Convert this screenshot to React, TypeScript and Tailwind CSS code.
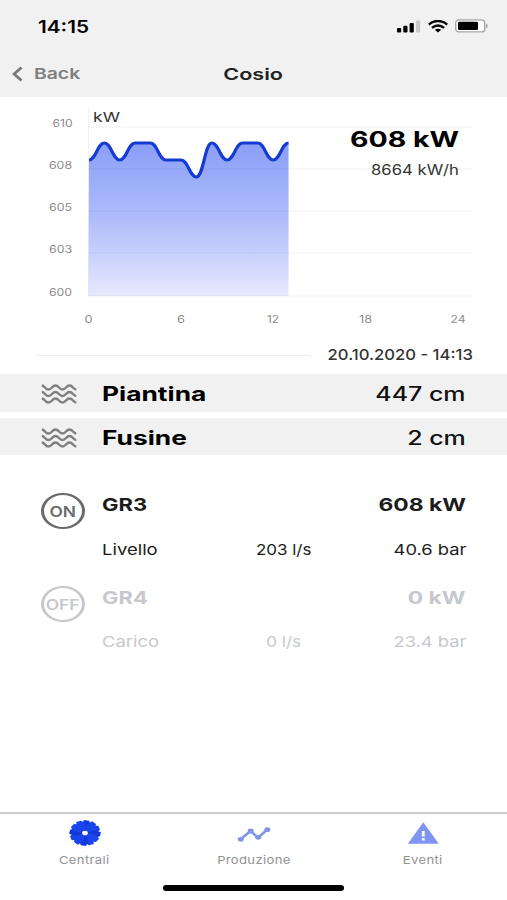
import React from "react";
import clsx from "clsx";

const GRID = [
  { label: "610", y: 30 },
  { label: "608", y: 72 },
  { label: "605", y: 114 },
  { label: "603", y: 156 },
  { label: "600", y: 199 },
];

const HOURS = [
  { label: "0", x: 88.5, w: 8 },
  { label: "6", x: 181, w: 8 },
  { label: "12", x: 273, w: 12 },
  { label: "18", x: 365.5, w: 13 },
  { label: "24", x: 458, w: 15 },
];

// one reading per hour, already in chart units
const READINGS = [63, 46, 63, 46, 46, 63, 63, 80, 46, 63, 46, 46, 63, 46];
const STEP = 15.35;

const linePath = READINGS.map((y, i) => {
  const x = 89 + i * STEP;
  if (i === 0) return `M${x} ${y}`;
  const prev = x - STEP;
  return `C${prev + 7} ${READINGS[i - 1]} ${x - 7} ${y} ${x} ${y}`;
}).join(" ");

const StatusBar = () => (
  <div className="flex h-[52px] items-center justify-between pl-[38px] pr-[19px]">
    <span className="mt-1 inline-block origin-left scale-x-[1.22] text-[17px] font-semibold text-black">
      14:15
    </span>
    <div className="flex items-center gap-[7px]">
      <svg width="24" height="13" viewBox="0 0 24 13">
        <rect x="0" y="8" width="4.2" height="4.5" rx="1" />
        <rect x="6.3" y="5.8" width="4.2" height="6.7" rx="1" />
        <rect x="12.6" y="3" width="4.2" height="9.5" rx="1" />
        <rect x="19" y="0.5" width="4.2" height="12" rx="1" fill="#c9c9c9" />
      </svg>
      <svg width="20" height="13" viewBox="0 0 20 13" fill="none" stroke="#000" strokeWidth="2.4">
        <path d="M0.8 4.6C6 -.2 14 -.2 19.2 4.6" />
        <path d="M4 7.8C7.5 4.7 12.5 4.7 16 7.8" />
        <path d="M6.8 9.8C8.5 8.4 11.5 8.4 13.2 9.8L10 12.6Z" fill="#000" stroke="none" />
      </svg>
      <svg width="33" height="14" viewBox="0 0 33 14">
        <rect x="0.7" y="0.9" width="29" height="12" rx="3.2" fill="#fff" stroke="#a5a5a5" strokeWidth="1.4" />
        <rect x="3" y="2.7" width="20" height="8.4" rx="1.4" />
        <path d="M31 4.8C33.2 5.2 33.2 8.8 31 9.2Z" fill="#a5a5a5" />
      </svg>
    </div>
  </div>
);

const Header = () => (
  <header className="h-[97px] bg-[#f1f1f1]">
    <StatusBar />
    <div className="grid h-[43px] grid-cols-3 items-center text-base font-semibold">
      <button type="button" className="flex items-center gap-[11px] pl-3 text-[#7f7f7f]">
        <svg width="11" height="16" viewBox="0 0 11 16" fill="none" stroke="#777" strokeWidth="2.8">
          <path d="M9.5 1.5L2 8l7.5 6.5" />
        </svg>
        <span className="mt-0.5 inline-block origin-left scale-x-[1.29] text-[15px]">Back</span>
      </button>
      <h1 className="text-center text-[#222]">
        <span className="inline-block scale-x-[1.35]">Cosio</span>
      </h1>
    </div>
  </header>
);

const PowerChart = () => (
  <svg width="507" height="236" viewBox="0 0 507 236" className="block">
    <defs>
      <linearGradient id="area" x1="0" y1="46" x2="0" y2="199" gradientUnits="userSpaceOnUse">
        <stop offset="0" stopColor="#8a9ef7" />
        <stop offset="0.5" stopColor="#afbdfb" />
        <stop offset="1" stopColor="#e7e9fd" />
      </linearGradient>
    </defs>
    <path d={`${linePath} V199 H88.5 Z`} fill="url(#area)" />
    {GRID.map((g) => (
      <g key={g.label}>
        <line x1="88" x2="473" y1={g.y} y2={g.y} stroke="#000" strokeOpacity="0.055" />
        <text
          x={g.label === "610" ? 52.5 : 49}
          y={g.y + 0.4}
          fontSize="10.5"
          fill="#8c8c8c"
          textLength={g.label === "610" ? 20 : 23}
          lengthAdjust="spacingAndGlyphs"
        >
          {g.label}
        </text>
      </g>
    ))}
    <line x1="88.5" x2="88.5" y1="11" y2="199" stroke="#000" strokeOpacity="0.05" />
    <path d={linePath} fill="none" stroke="#153cd2" strokeWidth="3.2" />
    <text x="93" y="25" fontSize="13.5" fill="#333" textLength="27" lengthAdjust="spacingAndGlyphs">
      kW
    </text>
    {HOURS.map((h) => (
      <text
        key={h.label}
        x={h.x - h.w / 2}
        y="225.5"
        fontSize="10.5"
        fill="#8c8c8c"
        textLength={h.w}
        lengthAdjust="spacingAndGlyphs"
      >
        {h.label}
      </text>
    ))}
    <text x="350" y="50.4" fontSize="21" fontWeight="700" textLength="109" lengthAdjust="spacingAndGlyphs">
      608 kW
    </text>
    <text x="371" y="78" fontSize="14" fill="#333" textLength="88" lengthAdjust="spacingAndGlyphs">
      8664 kW/h
    </text>
  </svg>
);

const Waves = () => (
  <svg width="36" height="20" viewBox="0 0 36 20" fill="none" stroke="#808080" strokeWidth="2.4">
    {[3.5, 10, 16.5].map((y) => (
      <path
        key={y}
        d={`M.8 ${y - 2}C4 ${y - 2} 4 ${y + 2} 7.5 ${y + 2}S11 ${y - 2} 14.5 ${y - 2}S18 ${y + 2} 21.5 ${y + 2}S25 ${y - 2} 28.5 ${y - 2}S32 ${y + 2} 35.3 ${y + 2}`}
      />
    ))}
  </svg>
);

const LevelRow = ({ name, value }: { name: string; value: string }) => (
  <div className="flex h-[37.5px] items-center bg-[#f1f1f1] pl-[41px] pr-[41px] pt-[3px] text-[19.5px] text-black">
    <Waves />
    <span className="ml-[25px] mt-px inline-block origin-left scale-x-[1.35] font-bold">{name}</span>
    <span className="ml-auto mt-px inline-block origin-right scale-x-[1.28] font-medium text-[#111]">
      {value}
    </span>
  </div>
);

interface GroupProps {
  on?: boolean;
  name: string;
  power: string;
  mode: string;
  flow: string;
  pressure: string;
}

const GroupRow = ({ on, name, power, mode, flow, pressure }: GroupProps) => (
  <div className={clsx("flex h-[92.5px] px-[41px]", on ? "text-[#1c1c1c]" : "text-[#c6c8cd]")}>
    <div
      className={clsx(
        "mt-[8px] flex h-[36px] w-[44px] shrink-0 items-center justify-center rounded-[50%] border-x-[3px] border-y-2 pt-0.5 text-sm font-semibold",
        on ? "border-[#6b6b6b] text-[#6b6b6b]" : "border-[#c6c8cd]"
      )}
    >
      <span className="inline-block scale-x-[1.24]">{on ? "ON" : "OFF"}</span>
    </div>
    <div className="ml-[17px] flex-1">
      <div className="flex h-10 items-center justify-between text-lg font-bold">
        <span className="inline-block origin-left scale-x-[1.22]">{name}</span>
        <span className="inline-block origin-right scale-x-[1.27]">{power}</span>
      </div>
      <div className="mt-[5px] grid h-10 grid-cols-3 items-center text-[15px]">
        <span className="inline-block origin-left scale-x-[1.23]">{mode}</span>
        <span className="inline-block scale-x-[1.13] text-center">{flow}</span>
        <span className="inline-block origin-right scale-x-[1.22] text-right">{pressure}</span>
      </div>
    </div>
  </div>
);

const Turbine = () => (
  <svg width="34" height="28" viewBox="-17 -14 34 28">
    <g transform="scale(1.22 1)">
      <circle r="10" fill="#1a45ea" />
      {Array.from({ length: 12 }, (_, i) => (
        <path
          key={i}
          d="M-1 -2L-4 -8L-2.6 -12.8L1.6 -12.6L3.6 -9L3 -5Z"
          fill={i % 3 ? "#1a45ea" : "#1339d8"}
          transform={`rotate(${i * 30 + 8})`}
        />
      ))}
      <circle r="2.3" fill="#fff" />
    </g>
  </svg>
);

const Trend = () => (
  <svg width="34" height="28" viewBox="0 0 34 28" fill="#8095e8">
    <path d="M3.5 20.5L13.5 12L21 18.5L30.5 10.5" fill="none" stroke="#8095e8" strokeWidth="2.5" />
    <ellipse cx="3.8" cy="20.3" rx="3" ry="2.4" />
    <ellipse cx="13.7" cy="12" rx="3" ry="2.4" />
    <ellipse cx="21.2" cy="18.3" rx="3" ry="2.4" />
    <ellipse cx="30.3" cy="10.7" rx="3" ry="2.4" />
  </svg>
);

const Warning = () => (
  <svg width="34" height="28" viewBox="0 0 34 28">
    <path d="M17.3 3.3L32.8 24.8H1.8Z" fill="#8095f3" />
    <rect x="15.9" y="12" width="2.8" height="5.5" fill="#fff" />
    <rect x="15.9" y="19.2" width="2.8" height="2.3" fill="#fff" />
  </svg>
);

const TABS = [
  { label: "Centrali", icon: <Turbine /> },
  { label: "Produzione", icon: <Trend /> },
  { label: "Eventi", icon: <Warning /> },
];

const TabBar = () => (
  <footer className="mt-auto h-[88px] border-t-2 border-[#cecece]">
    <nav className="grid grid-cols-3 pt-[5px]">
      {TABS.map((tab) => (
        <button key={tab.label} type="button" className="flex flex-col items-center text-[#929292]">
          {tab.icon}
          <span className="mt-[5px] inline-block scale-x-[1.19] text-[11px] leading-4 tracking-wide">
            {tab.label}
          </span>
        </button>
      ))}
    </nav>
    <div className="mx-auto mt-[17px] h-[6px] w-[181px] rounded-full bg-black" />
  </footer>
);

const App: React.FC = () => {
  return (
    <div className="flex h-[900px] w-[507px] flex-col overflow-hidden bg-white font-['Inter',sans-serif]">
      <Header />
      <PowerChart />

      {/* LAST UPDATE */}
      <div className="flex h-[41px] items-center pl-9 pr-[34px] pt-[3px]">
        <div className="h-px w-[274px] bg-[#ededed]" />
        <span className="ml-auto inline-block origin-right scale-x-[1.11] whitespace-nowrap text-[15px] font-medium text-[#333]">
          20.10.2020 - 14:13
        </span>
      </div>

      {/* WATER LEVELS */}
      <div className="flex flex-col gap-[6px]">
        <LevelRow name="Piantina" value="447 cm" />
        <LevelRow name="Fusine" value="2 cm" />
      </div>

      {/* GROUPS */}
      <div className="mt-[30px]">
        <GroupRow on name="GR3" power="608 kW" mode="Livello" flow="203 l/s" pressure="40.6 bar" />
        <GroupRow name="GR4" power="0 kW" mode="Carico" flow="0 l/s" pressure="23.4 bar" />
      </div>

      <TabBar />
    </div>
  );
};

export default App;
